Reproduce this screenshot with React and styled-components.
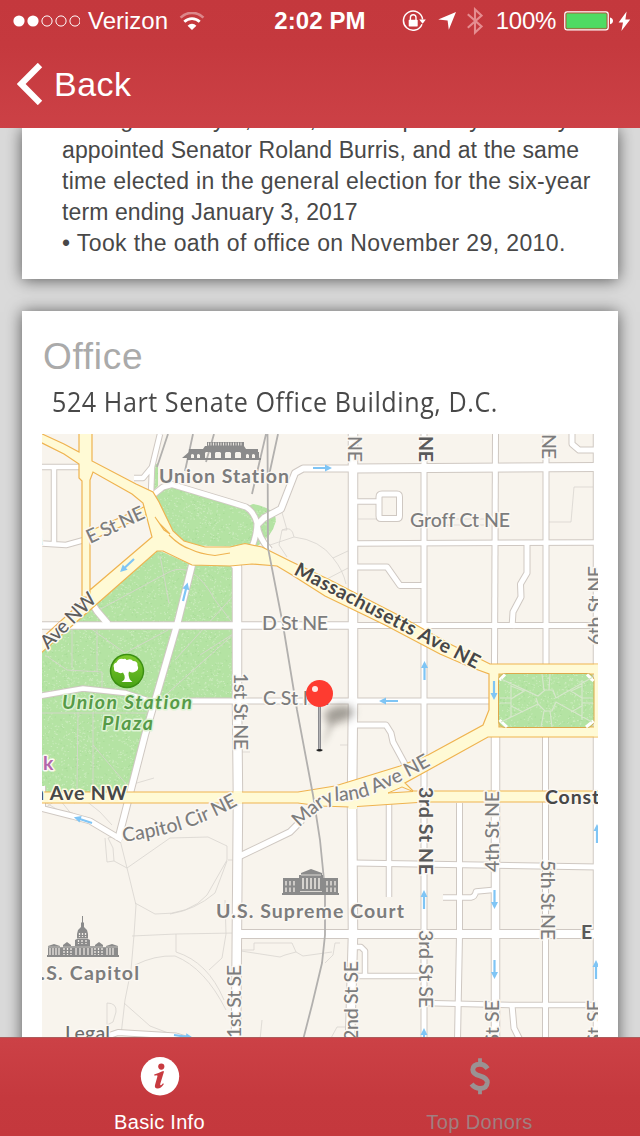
import React from "react";
import styled, { createGlobalStyle } from "styled-components";

const GlobalStyle = createGlobalStyle`
  * { box-sizing: border-box; }
  html, body { margin: 0; padding: 0; }
  body { font-family: "Liberation Sans", Arial, sans-serif; background: #dadada; }
  svg { display: block; flex: none; }
`;

const Screen = styled.div`
  width: 640px;
  height: 1136px;
  display: flex;
  flex-direction: column;
  overflow: hidden;
`;

const Header = styled.header`
  height: 128px;
  flex: none;
  background: linear-gradient(#c4383d 0, #c5393e 45px, #cc4146 128px);
  color: #fff;
`;

const StatusBar = styled.div`
  height: 40px;
  display: grid;
  grid-template-columns: 1fr auto 1fr;
  align-items: center;
  padding: 2px 9px 0 13px;
  font-size: 24px;
  line-height: 38px;
`;

const StatusGroup = styled.div`
  display: flex;
  align-items: center;
  justify-content: ${(p) => (p.$end ? "flex-end" : "flex-start")};
`;

const Carrier = styled.span`
  margin: 0 11px 0 8px;
`;

const Clock = styled.span`
  font-weight: bold;
  letter-spacing: 0.1px;
  padding-right: 4px;
`;

const Percent = styled.span`
  margin: 0 8px 0 13px;
  letter-spacing: -0.3px;
`;

const Spaced = styled.div`
  margin-left: ${(p) => p.$gap}px;
`;

const BackButton = styled.button`
  display: flex;
  align-items: center;
  gap: 11px;
  height: 88px;
  padding: 0 0 1px 17px;
  border: 0;
  background: none;
  color: #fff;
  font: 34px/40px "Liberation Sans", Arial, sans-serif;
  letter-spacing: 0.5px;
`;

const Content = styled.main`
  flex: 1;
  min-height: 0;
  overflow: hidden;
  background: #dadada;
  display: flex;
  flex-direction: column;
  justify-content: flex-start;
  padding: 0 22px;
  gap: 32px;
`;

const Card = styled.section`
  flex: none;
  background: #fff;
  box-shadow: 0 1px 15px rgba(0, 0, 0, 0.6);
`;

const HistoryCard = styled(Card)`
  height: 151px;
  padding-left: 40px;
`;

const HistoryText = styled.div`
  height: 151px;
  overflow: hidden;
  display: flex;
  flex-direction: column;
  justify-content: flex-end;
  padding-bottom: 20px;
`;

const Line = styled.div`
  flex: none;
  font-size: 23px;
  line-height: 31px;
  color: #484848;
  white-space: nowrap;
  letter-spacing: ${(p) => p.$ls}px;
`;

const OfficeCard = styled(Card)`
  height: 760px;
  padding: 24px 20px 0;
`;

const CardTitle = styled.h2`
  margin: 0;
  padding-left: 1px;
  font-size: 37px;
  line-height: 44px;
  font-weight: normal;
  letter-spacing: 0.7px;
  color: #aaa;
`;

const Address = styled.div`
  margin-top: 1px;
  padding-left: 10px;
  height: 54px;
  font-family: "Open Sans", "Noto Sans", sans-serif;
  font-size: 27px;
  line-height: 44px;
  white-space: nowrap;
  color: #484848;
  letter-spacing: 0.6px;
  transform: scaleX(0.93);
  transform-origin: 10px 0;
`;

const TabBar = styled.nav`
  height: 99px;
  flex: none;
  display: grid;
  grid-template-columns: 1fr 1fr;
  border-top: 1px solid #ac5c5c;
  background: linear-gradient(#cc4146 0, #c5393e 60px, #c4383d 98px);
`;

const Tab = styled.div`
  display: flex;
  flex-direction: column;
  align-items: center;
  padding-top: 19px;
  color: ${(p) => (p.$active ? "#fff" : "#a17f80")};
`;

const TabLabel = styled.span`
  margin-top: 15px;
  padding-right: 1px;
  font-size: 20px;
  line-height: 23px;
  letter-spacing: ${(p) => p.$ls}px;
`;

/* ---------- status icons ---------- */

const Signal = () => (
  <svg width="67" height="12" viewBox="0 0 67 12">
    {[0, 1, 2, 3, 4].map((i) => (
      <circle key={i} cx={6 + i * 14} cy="6" r={i < 2 ? 5.6 : 5.1}
        fill={i < 2 ? "#fff" : "none"} stroke="#fff" strokeWidth={i < 2 ? 0 : 1} />
    ))}
  </svg>
);

const Wifi = () => (
  <svg width="26" height="19" viewBox="0 0 26 19" fill="none" stroke="#fff" strokeWidth="2.7">
    <path d="M1.6 5.6A16.2 16.2 0 0 1 24.4 5.6" opacity=".4" />
    <path d="M5.3 9.8A11 11 0 0 1 20.7 9.8" />
    <path d="M8.6 13.7A6.2 6.2 0 0 1 17.4 13.7L13 18Z" fill="#fff" stroke="none" />
  </svg>
);

const RotationLock = () => (
  <svg width="24" height="22" viewBox="0 0 24 22">
    <path d="M20 14.2A9.6 9.6 0 1 1 20.6 9.5" fill="none" stroke="#fff" strokeWidth="1.5" />
    <path d="M17.2 9.5h6.6l-3.2 4.2z" fill="#fff" />
    <rect x="6.7" y="9.8" width="9" height="6.6" rx=".6" fill="#fff" />
    <path d="M8.4 10V7.6a2.8 2.8 0 0 1 5.6 0V10" fill="none" stroke="#fff" strokeWidth="1.4" />
  </svg>
);

const Location = () => (
  <svg width="18" height="18" viewBox="0 0 18 18"><path d="M18 0L10.8 17.8L9.6 8.6L.2 7.4Z" fill="#fff" /></svg>
);

const Bluetooth = () => (
  <svg width="16" height="28" viewBox="0 0 16 28">
    <path d="M.8 7.2L14.5 19.4L8 25.6V2.4L14.5 8.6L.8 20.8" fill="none" stroke="#e58d90" strokeWidth="2.1" />
  </svg>
);

const Battery = () => (
  <svg width="50" height="20" viewBox="0 0 50 20">
    <rect x=".8" y=".8" width="43.4" height="18" rx="2.4" fill="none" stroke="#fff" strokeWidth="1.3" />
    <rect x="2.2" y="2.2" width="40.6" height="15.2" rx=".8" fill="#4fdb63" stroke="#8f7b35" strokeWidth=".5" />
    <path d="M46 6.4q3 .6 3 3.4t-3 3.4z" fill="#fff" />
  </svg>
);

const Bolt = () => (
  <svg width="13" height="21" viewBox="0 0 13 21"><path d="M8.6 .6L.6 11.4H5L3.4 20L12.2 8.4H7.4Z" fill="#fff" /></svg>
);

const Chevron = () => (
  <svg width="26" height="42" viewBox="0 0 26 42"><path d="M23 2L4.2 21L23 40" fill="none" stroke="#fff" strokeWidth="6.2" /></svg>
);

const InfoIcon = () => (
  <svg width="40" height="39" viewBox="0 0 40 39">
    <circle cx="20" cy="19.3" r="19.2" fill="#fff" />
    <circle cx="21.3" cy="9.6" r="3.1" fill="#c83b40" />
    <path d="M14.2 17.4q4.400-1.200 8.200-3.200h1.700l-3.800 12.600q-.4 1.600.4 1.500.9-.2 2.300-2l.9.700q-3 4.600-6.300 4.600-3.600-.3-2.500-3.800l2.300-8.300q.4-1.300-1.200-1.100l-2 .2z" fill="#c83b40" />
  </svg>
);

const DollarIcon = () => (
  <svg width="22" height="39" viewBox="0 0 22 39" fill="none" stroke="#9a9293">
    <path d="M11 1.3V8M11 31V37.300" strokeWidth="3.800" />
    <path d="M18.600 11.600Q15.400 7.200 10.800 7.200Q4.100 7.300 3.800 12.600Q3.900 17 10.900 18.800Q18.400 21 18.300 25.400Q17.800 31.500 11.200 31.500Q5.700 31.300 2.600 27" strokeWidth="4.900" />
  </svg>
);

/* ---------- map ---------- */

const ROADS = [
  ["M353 434V700L352 800L353 935L350 1040", 8.5],
  ["M229 556L237 567V700L238 800L236 1040", 8.5],
  ["M424 434V1040", 5],
  ["M495.500 434L494.500 664", 5],
  ["M495.500 737V1040", 7.5],
  ["M546 434V664M545.500 737V1040", 5],
  ["M597 434V1040", 6.5],
  ["M459.500 803V935L457.500 1040", 5],
  ["M389 803V897", 4.500],
  ["M257 525L264 518L281 509L295 473L303 468.500H353", 6],
  ["M353 468.500L600 467", 8],
  ["M353 543.500L600 542.500", 4.500],
  ["M353 567H387L400 585.500H424", 5],
  ["M40 625.500H350", 6.5],
  ["M350 625.500H600", 5],
  ["M353 501.500H379", 4.500],
  ["M382 494H397Q399.500 494 399.500 497V516Q399.500 518.500 397 518.500H381Q379 518.500 379 516V497Q379 494 382 494", 5],
  ["M187 701H490", 5],
  ["M40 696L83 688.500L125 693L150 701", 4.500],
  ["M192 565L177 625L145 735L118 840", 6],
  ["M40 808L72 816L90 821L122 840", 5],
  ["M40 467H80M54 467V543M40 543.500L66 545L84 540", 4.500],
  ["M160 434L152 467L143 478H134M152 467L151 495", 4.500],
  ["M153 495L163 487L172 484.500L230 502L246 507Q254 512 257 523Q257 534 252 547M257 523Q258 538 270 550", 5],
  ["M88 597L97 611L108 624", 6],
  ["M527 542V573L520.500 584L521 597L513 612L512 628", 5],
  ["M572 430V444L579 450H600", 5],
  ["M354 725H386L391 733L393 742L406 766", 5],
  ["M354 863L600 867", 5],
  ["M443 897.500H471Q475 897 476 891.500L492 890", 4.500],
  ["M238 934H600", 8],
  ["M353 947H361L365 951V976M353 976H422", 4.500],
  ["M424 1003L510 1005H600", 4.500],
  ["M512 1005L514 1028L521 1042", 5],
  ["M236 858L290 832L302 820", 5.5],
  ["M90 1042L118 1032.500L176 1036L196 1042", 5],
  ["M43 786V807", 4],
];

const PATHS = `
M281 509L287 530L282 530L279 545L287 557M282 530Q292 525 294 537M270 545L294 537Q320 540 333 558Q343 570 346 584M333 558L350 550M325 580L350 567
M598 487H574L571 522H546 M357 519H379M430 519H500 M430 525H490
M160 556L169 603 M95 612L169 572Q193 560 215 600L234 625 M200 655L236 632M175 660L234 595M160 700L236 632
M45 655L67 670L102 672M72 628V668M97 628V672M102 672V690M90 628L125 653L168 630M78 712L77 790M93 712V790M93 745L127 785M42 713H150
M45 802L66 815M60 800L73 816M85 800L100 812L112 825M130 785L154 778M45 808Q60 795 75 803
M105 838L107 862L114 861L113 848L108 838L120 835M120 840L127 868L136 905L134 935L131 970L125 1000L121 1035M114 861L127 868L170 838L208 837L227 846V860L207 895Q190 915 155 914L135 903M228 860H235M227 861L215 893Q195 910 170 914
M132 936L176 934V952Q208 962 224 1000M176 934L235 933M135 965Q155 955 175 956Q205 968 226 1010M225 900L226 934L222 958L209 970
M124 1003L150 1026L176 1036M107 1003Q117 1003 116 1012L113 1022L107 1025ZM241 950H254V943H292L296 952L285 955L280 957L241 951M296 952L303 956L332 952
M340 943H335L333 955L325 963M330 1040L337 1027H348M262 1020L260 1040M340 745H349M242 752H250`;

const RAILS = "M267.500 434L268 548L283 625L297 710L313 795L320 840L325 890L325 935L322 963L312 1005L303 1040M278 434L268 480M266 434L252 494M168 434L157 467M193 434L185 471M214 434L206 462";

const YELLOW = [
  "M90 531L146 506L150 513L90 541Z",
  "M40 433L64 444L79 452V430H92V461L136 484L153 492L159 502L173 531L184 541L205 547L230 547L245 543.500L262 547L290 561L330 580L400 616L450 644L490 664H600V674H499V727H600V737H488L425 772L405 783L413 791H600V802H425L380 805L350 807L320 806L298 803H40V792H298L335 786L400 766L428 755L483 725L489 710V674L470 667L440 654L385 625L325 596L292 575L277 566L252 564L230 566L192 565L163 551H157L98 603L40 654V640L86 598L90 590L152 537L143 503L132 494L93 472L90 480V597H82V481L79 478V464L64 454L40 442Z",
];

const ARROWS = [
  [313, 468, 0], [134, 559, 137], [183, 601, -76], [424.5, 680, -90], [494, 681, 90], [398, 701, 180],
  [92, 823, 198], [597, 843, -90], [424, 909, -90], [494.500, 890, 90], [494.500, 960, 90], [596, 979, -90],
  [424, 1047, -90], [174, 1035, 8],
];

const Arrow = ({ x, y, a }) => (
  <path transform={`translate(${x} ${y}) rotate(${a})`} d="M0 -1.100H12V-3.500L19 0L12 3.500V1.100H0Z" fill="#7fc5f5" />
);

const GRASS = (() => {
  let s = 7;
  const next = () => (s = (s * 1103515245 + 12345) % 2147483648) / 2147483648;
  const blades = (n) =>
    Array.from({ length: n }, () =>
      `M${(next() * 118).toFixed(1)} ${(1 + next() * 112).toFixed(1)}l1.300 ${(next() - 0.5).toFixed(1)}`).join("");
  return { light: blades(950), dark: blades(350) };
})();

const Label = styled.text`
  font-family: Lato, "Open Sans", sans-serif;
  font-size: ${(p) => p.$size || 19.5}px;
  font-weight: ${(p) => (p.$bold ? 700 : 500)};
  font-style: ${(p) => (p.$italic ? "italic" : "normal")};
  font-variant-ligatures: none;
  fill: ${(p) => p.$color || "#7d7d7d"};
  stroke: ${(p) => p.$halo || "#fbf8f3"};
  stroke-width: ${(p) => p.$haloWidth || 3}px;
  stroke-linejoin: round;
  paint-order: stroke;
`;

const Street = ({ x, y, a = 0, len, children, ...rest }) => (
  <Label transform={`translate(${x} ${y}) rotate(${a})`} textLength={len} lengthAdjust="spacing" {...rest}>
    {children}
  </Label>
);

const StationIcon = () => (
  <g fill="#8b8b8b">
    <path d="M207 442h37v5h-37zM189 449h14l2-3h39l2 3h12v3h-69zM187 458h74v2h-74z" />
    <path d="M189 452h70v6h-4v-3q-2-2-3 0v3h-3v-3q-2-2-3 0v3h-5v-5q-3-4-6 0v5h-4v-5q-3-4-6 0v5h-4v-5q-3-4-6 0v5h-4v-5q-3-4-6 0v5h-5v-3q-2-2-3 0v3h-3v-3q-2-2-3 0v3h-9z" />
    <path d="M208 444h35" stroke="#e8e4de" strokeWidth="3" strokeDasharray="1 1.500" />
  </g>
);

const CourtIcon = () => (
  <g>
    <path d="M283 878h16v-3h2v-2l10-4l11 4v2h1v3h15v15h1v2h-57v-2h1z" fill="#8b8b8b" />
    <path d="M303 878v11M307 878v11M311 878v11M315 878v11M319 878v11" stroke="#f0ece6" strokeWidth="1.500" />
    <path d="M286 881v11M290 881v11M294 881v11M327 881v11M331 881v11M335 881v11" stroke="#f0ece6" strokeWidth="1.300" strokeDasharray="4.500 2" />
    <path d="M300 891.500h22M301 875h20" stroke="#f0ece6" strokeWidth=".8" />
  </g>
);

const CapitolIcon = () => (
  <g>
    <path d="M47 957v-2h1v-9l6-2l6 2v1h3v-2l4-3l4 3v1h4v-6l2-1v-5l1-4l3-3v-4l1-1v-6h1v6l1 1v4l3 3l1 4v5l2 1v6h5v-1l4-3l4 3v2h3v-1l6-2l6 2v9h1v2z" fill="#8b8b8b" />
    <path d="M50 948v7M53 948v7M56 948v7M59 948v7M107 948v7M110 948v7M113 948v7M76 948v7M80 948v7M84 948v7M88 948v7M92 948v7" stroke="#f0ece6" strokeWidth="1.200" />
    <path d="M64 948v7M67.500 948v7M71 948v7M95 948v7M98.500 948v7M102 948v7M78.500 940v4M82 940v4M86 940v4M79.500 933v4M82.500 933v4M85.500 933v4" stroke="#f0ece6" strokeWidth="1.300" strokeDasharray="2 1" />
    <path d="M48 947h70M76 938.500h13" stroke="#f0ece6" strokeWidth=".5" />
  </g>
);

const ParkBadge = () => (
  <g>
    <circle cx="127" cy="671" r="17.200" fill="#3b8f12" />
    <circle cx="127" cy="671" r="15.700" fill="url(#badge)" />
    <path d="M127 660q4-2 6 1q5 0 4.500 4.500q2 4-2 6q-3 2-6.500 0l-.5 2q0 6 4 8.500h-11q4-2 3-6.500l-1.500-3q-3 1.500-5.500-.5q-4 0-3.500-4q-1.500-4.500 2.500-5.500q2-5 7-3.500q2-1 3 1z" fill="#fff" />
  </g>
);

const Pin = () => (
  <g>
    <ellipse cx="339" cy="714" rx="15" ry="8" transform="rotate(-12 339 714)" fill="#6b665f" opacity=".62" filter="url(#soft)" />
    <path d="M322 748L329 718L337 720Z" fill="#6b665f" opacity=".3" filter="url(#softer)" />
    <path d="M319.500 704V750" stroke="#86868a" strokeWidth="3" />
    <path d="M319.500 706V749" stroke="#b3b3b6" strokeWidth="1.200" />
    <path d="M316 750q3.500-2 7 0q-3.500 3-7 0z" fill="#222" />
    <circle cx="319.500" cy="693.500" r="13.500" fill="#fe3b30" />
    <circle cx="315" cy="689" r="3" fill="#ffe9e4" />
  </g>
);

const OfficeMap = () => (
  <svg width="556" height="604" viewBox="42 434 556 604">
    <defs>
      <pattern id="grass" x="37" y="430" width="120" height="114" patternUnits="userSpaceOnUse">
        <rect x="-1" y="-1" width="122" height="116" fill="#b4e3a3" />
        <path d={GRASS.light} stroke="#cbecbd" strokeWidth="1" />
        <path d={GRASS.dark} stroke="#a8dc98" strokeWidth="1" />
      </pattern>
      <linearGradient id="badge" x1="0" y1="0" x2="0" y2="1">
        <stop offset="0" stopColor="#7dc92c" />
        <stop offset="1" stopColor="#49a316" />
      </linearGradient>
      <filter id="soft" x="-60%" y="-80%" width="220%" height="260%"><feGaussianBlur stdDeviation="4" /></filter>
      <filter id="softer" x="-100%" y="-50%" width="300%" height="200%"><feGaussianBlur stdDeviation="3" /></filter>
      <path id="capitolCir" d="M123 842Q165 836 190 827T240 804" />
      <path id="maryland" d="M299 828Q324 803 337 801Q362 800 377 792Q405 780 433 764" />
    </defs>
    <rect x="42" y="434" width="556" height="604" fill="#f8f4ed" />
    <g fill="url(#grass)">
      <path d="M151 493L172 485L246 507L253 504Q276 508 276 521Q272 537 256 547L170 545ZM152 467L158 463V486L152 492Z" />
      <path d="M158 550L192 565H235V699H155L128 794H40V652Z" />
      <path d="M498 673H595V728H498Z" />
    </g>
    <path d={PATHS} fill="none" stroke="#d8d4cf" strokeWidth="1" opacity=".8" />
    <g fill="none" strokeLinejoin="round">
      {ROADS.map(([d, w], i) => <path key={i} d={d} stroke="#cfc8c2" strokeWidth={w + 2} />)}
      {ROADS.map(([d, w], i) => <path key={i} d={d} stroke="#fff" strokeWidth={w} />)}
    </g>
    {YELLOW.map((d, i) => <path key={i} d={d} fill="#fffad5" stroke="#efb350" strokeWidth="1.200" />)}
    <path d="M388 793L402 787L413 791.500Z" fill="#f8f4ed" stroke="#efb350" />
    <path d="M155 517L164 530L170 534L160 524ZM169 535Q180 546 190 549Q200 554 215 555.500L230 553" fill="none" stroke="#efb350" strokeWidth="1.100" />
    <rect x="594" y="664.700" width="5" height="71.600" fill="#fffad5" />
    <path d="M233.500 791V804H242V791ZM348.500 785V809H357V781Z" fill="#fffad5" stroke="none" />
    <rect x="498.500" y="673.500" width="95.500" height="54" rx="7" fill="url(#grass)" stroke="#dda94a" />
    <g fill="none" stroke="#fff" strokeWidth="3">
      <path d="M499.500 680L505 674.500M587 674.500L593.500 681M499.500 720L507 727M586 727L593.500 721" />
    </g>
    <path d="M501 679L538 696L545 690H553L556 698L593 677M501 722L538 704L536 698M538 704L545 711H552L556 702L592 722M511 682V718M582 680V720M542 674L544 690M550 674L549 690M544 711L541 727M550 711L552 727M500 698H511M500 703H511M582 698H593M582 703H593M511 686L524 691L511 699M511 706L523 712M582 686L571 691L582 698M582 706L571 712" fill="none" stroke="#d6e6cb" strokeWidth="1.200" />
    <path d={RAILS} fill="none" stroke="#b2b0ae" strokeWidth="1.800" />
    {ARROWS.map(([x, y, a], i) => <Arrow key={i} x={x} y={y} a={a} />)}

    <StationIcon />
    <CourtIcon />
    <CapitolIcon />
    <ParkBadge />

    <Street x={159} y={483} len={130} $bold>Union Station</Street>
    <Street x={90} y={544} a={-25} len={62}>E St NE</Street>
    <Street x={48} y={650} a={-45} len={70} $color="#5d5d5d">Ave NW</Street>
    <Street x={35} y={548} a={-25} len={12}>V</Street>
    <Street x={348} y={436} a={90} len={26}>NE</Street>
    <Street x={419} y={436} a={90} len={26} $bold $color="#5a5a5a">NE</Street>
    <Street x={541.5} y={434} a={90} len={25}>NE</Street>
    <Street x={410} y={527} len={100}>Groff Ct NE</Street>
    <Street x={293} y={574} a={27.5} len={206} $bold $color="#474747" $halo="#fffbe6">Massachusetts Ave NE</Street>
    <Street x={262} y={630} len={66}>D St NE</Street>
    <Street x={263} y={705} len={66}>C St NE</Street>
    <Street x={233.500} y={673} a={90} len={77}>1st St NE</Street>
    <Street x={62} y={709} len={130} $bold $italic $color="#569b47" $halo="#dff3d5">Union Station</Street>
    <Street x={102} y={730} len={51} $bold $italic $color="#569b47" $halo="#dff3d5">Plaza</Street>
    <Street x={43} y={770} len={10} $bold $color="#b266ab">k</Street>
    <Street x={33} y={800} len={94} $bold $color="#474747" $halo="#fffbe6">n Ave NW</Street>
    <Label><textPath href="#capitolCir" textLength="122" lengthAdjust="spacing">Capitol Cir NE</textPath></Label>
    <Label><textPath href="#maryland" textLength="149" lengthAdjust="spacing">Maryland Ave NE</textPath></Label>
    <Street x={545} y={804} len={60} $bold $color="#474747">Consti</Street>
    <Street x={418.500} y={787} a={90} len={88} $bold $color="#5a5a5a">3rd St NE</Street>
    <Street x={419} y={930} a={90} len={78}>3rd St SE</Street>
    <Street x={498.5} y={872} a={-90} len={81}>4th St NE</Street>
    <Street x={541} y={860} a={90} len={80}>5th St NE</Street>
    <Street x={581} y={939} len={11} $bold $color="#5a5a5a">E</Street>
    <Street x={241} y={1038} a={-90} len={73}>1st St SE</Street>
    <Street x={357.500} y={1041} a={-90} len={80}>2nd St SE</Street>
    <Street x={499} y={1079} a={-90} len={79}>4th St SE</Street>
    <Street x={601} y={1079} a={-90} len={79}>6th St SE</Street>
    <Street x={602} y={645} a={-90} len={79}>6th St NE</Street>
    <Street x={216} y={918} len={188} $bold>U.S. Supreme Court</Street>
    <Street x={25} y={980} len={114} $bold>U.S. Capitol</Street>
    <Street x={65} y={1040} len={45} $color="#6c6c6c">Legal</Street>
    <Pin />
  </svg>
);

export default function App() {
  return (
    <Screen>
      <GlobalStyle />
      <Header>
        <StatusBar>
          <StatusGroup>
            <Signal />
            <Carrier>Verizon</Carrier>
            <Wifi />
          </StatusGroup>
          <Clock>2:02 PM</Clock>
          <StatusGroup $end>
            <RotationLock />
            <Spaced $gap={12}><Location /></Spaced>
            <Spaced $gap={11}><Bluetooth /></Spaced>
            <Percent>100%</Percent>
            <Battery />
            <Spaced $gap={4}><Bolt /></Spaced>
          </StatusGroup>
        </StatusBar>
        <BackButton>
          <Chevron />
          Back
        </BackButton>
      </Header>
      <Content>
        <HistoryCard>
          <HistoryText>
            <Line $ls={0.4}>ending January 3, 2011, the temporarily filled by</Line>
            <Line $ls={0.12}>appointed Senator Roland Burris, and at the same</Line>
            <Line $ls={0.28}>time elected in the general election for the six-year</Line>
            <Line $ls={0.11}>term ending January 3, 2017</Line>
            <Line $ls={0.39}>• Took the oath of office on November 29, 2010.</Line>
          </HistoryText>
        </HistoryCard>
        <OfficeCard>
          <CardTitle>Office</CardTitle>
          <Address>524 Hart Senate Office Building, D.C.</Address>
          <OfficeMap />
        </OfficeCard>
      </Content>
      <TabBar>
        <Tab $active>
          <InfoIcon />
          <TabLabel $ls={0.3}>Basic Info</TabLabel>
        </Tab>
        <Tab>
          <DollarIcon />
          <TabLabel $ls={0.4}>Top Donors</TabLabel>
        </Tab>
      </TabBar>
    </Screen>
  );
}
